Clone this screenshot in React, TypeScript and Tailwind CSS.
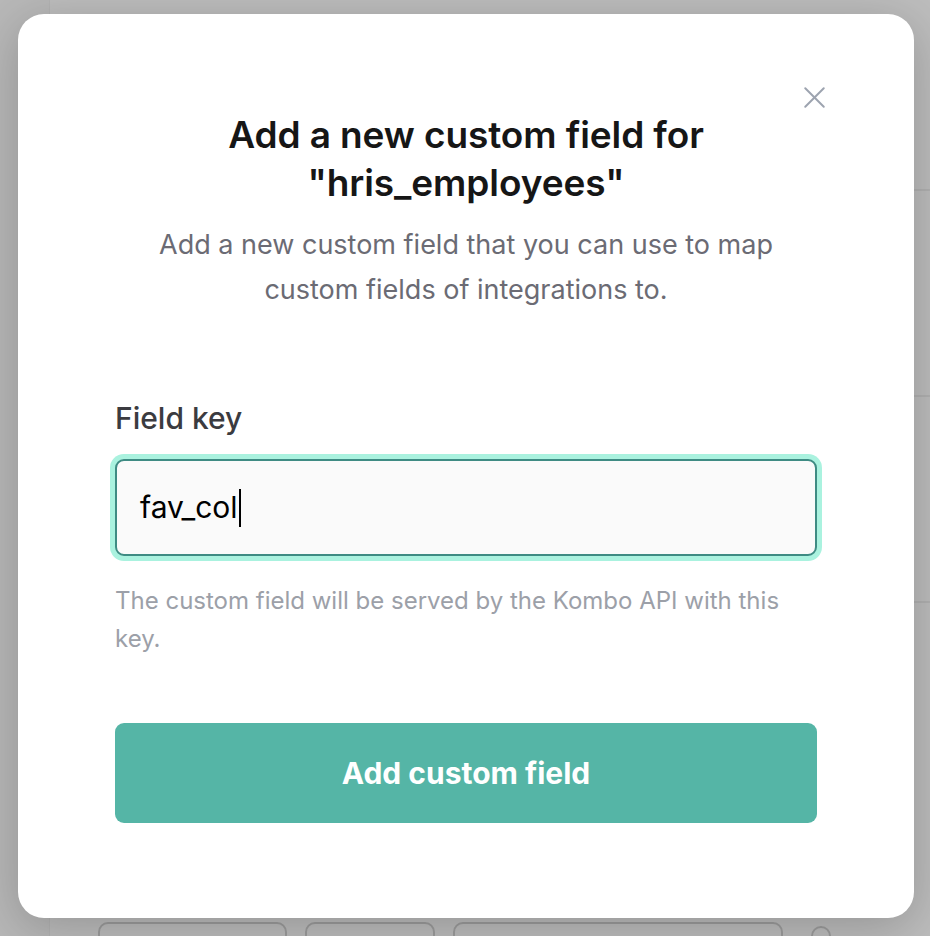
import { X } from "lucide-react";

export default function App() {
  return (
    <div
      className="relative w-[930px] h-[936px] overflow-hidden bg-[#bdbdbd] flex"
      style={{ fontFamily: "Inter, 'Noto Sans', sans-serif" }}
    >
      {/* Dimmed page behind the modal */}
      <div className="w-[50px] h-full bg-[#b8b8b8] border-r border-[#b3b3b3]" />
      <div className="flex-1 flex flex-col">
        <div className="h-[140px]" />
        <div className="h-[51px] border-b-2 border-[#b1b1b1]" />
        <div className="h-[206px] border-b-2 border-[#b1b1b1]" />
        <div className="h-[206px] border-b-2 border-[#b1b1b1]" />
        <div className="flex-1" />
        <div className="flex items-start gap-[18px] pl-[48px] h-[14px]">
          <div className="w-[189px] h-[30px] rounded-[10px] border-2 border-[#9d9d9d]" />
          <div className="w-[130px] h-[30px] rounded-[10px] border-2 border-[#9d9d9d]" />
          <div className="w-[330px] h-[30px] rounded-[10px] border-2 border-[#9d9d9d]" />
          <div className="w-[20px] h-[20px] mt-[4px] ml-[10px] rounded-full border-2 border-[#9d9d9d]" />
        </div>
      </div>

      {/* Modal */}
      <div className="absolute left-[18px] top-[14px] w-[896px] h-[904px] rounded-[26px] bg-white shadow-[0_10px_50px_rgba(0,0,0,0.22)] px-[97px] pt-[97px] flex flex-col">
        <button className="absolute right-[81px] top-[65px] text-[#9ca3af]">
          <X size={37} strokeWidth={1.3} />
        </button>

        <h2 className="text-center text-[37px] leading-[48px] font-semibold text-[#161616] tracking-[-0.1px]">
          Add a new custom field for
          <br />
          "hris_employees"
        </h2>
        <p className="mt-[15px] text-center text-[27px] leading-[45px] text-[#6b6b74] px-[20px]">
          Add a new custom field that you can use to map custom fields of
          integrations to.
        </p>

        <label className="mt-[88px] text-[30px] leading-[36px] font-medium text-[#3b3b40]">
          Field key
        </label>
        <div className="mt-[23px] h-[97px] rounded-[9px] border-2 border-[#3e8b83] bg-[#fafafa] ring-[5px] ring-[#aaf2df] flex items-center pl-[23px]">
          <span className="text-[30px] text-black">fav_col</span>
          <span className="ml-[1px] w-[2px] h-[38px] bg-black" />
        </div>

        <p className="mt-[26px] text-[24px] leading-[38px] text-[#9ca0a8] pr-[10px]">
          The custom field will be served by the Kombo API with this key.
        </p>

        <button className="mt-[65px] h-[100px] rounded-[9px] bg-[#55b5a6] text-white text-[30px] font-bold">
          Add custom field
        </button>
      </div>
    </div>
  );
}
